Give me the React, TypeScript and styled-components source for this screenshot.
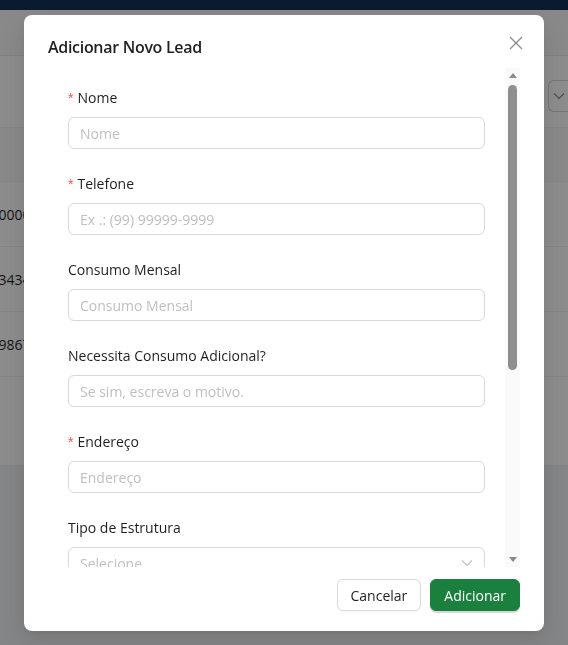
import React from 'react';
import styled, {createGlobalStyle} from 'styled-components';

const GlobalStyle = createGlobalStyle`
  html, body {
    margin: 0;
    padding: 0;
    background: #f0f2f5;
    font-family: "Open Sans", "Noto Sans", sans-serif;
    overflow: hidden;
  }
  * { box-sizing: border-box; }
`

interface Field {
    label: string,
    placeholder: string,
    required?: boolean,
    select?: boolean
}

const fields: Field[] = [
    {label: 'Nome', placeholder: 'Nome', required: true},
    {label: 'Telefone', placeholder: 'Ex .: (99) 99999-9999', required: true},
    {label: 'Consumo Mensal', placeholder: 'Consumo Mensal'},
    {label: 'Necessita Consumo Adicional?', placeholder: 'Se sim, escreva o motivo.'},
    {label: 'Endereço', placeholder: 'Endereço', required: true},
    {label: 'Tipo de Estrutura', placeholder: 'Selecione', select: true},
]

const rows = ['(11) 98765-0000', '(21) 91234-3434', '(31) 99876-9867']

const Chevron: React.FC<{color?: string}> = ({color = '#bfbfbf'}) => (
    <svg width="12" height="8" viewBox="0 0 12 8">
        <path d="M1 1.5 L6 6.5 L11 1.5" fill="none" stroke={color} strokeWidth="1.1"/>
    </svg>
)

export default function App() {
    return (
        <>
            <GlobalStyle/>
            <Page>
                <TopBar/>
                <Toolbar/>
                <FilterBar>
                    <FilterSelect>
                        <Chevron color="#8c8c8c"/>
                    </FilterSelect>
                </FilterBar>
                <Table>
                    <HeadRow/>
                    {rows.map(r => (
                        <Row key={r}>
                            <Cell>{r}</Cell>
                        </Row>
                    ))}
                    <EmptyRow/>
                </Table>
            </Page>
            <Overlay/>
            <ModalWrap>
                <Modal>
                    <ModalHeader>
                        <Title>Adicionar Novo Lead</Title>
                        <CloseButton aria-label="Fechar">
                            <svg width="14" height="14" viewBox="0 0 14 14">
                                <path d="M1 1 L13 13 M13 1 L1 13" stroke="#8a8a8a" strokeWidth="1.3"/>
                            </svg>
                        </CloseButton>
                    </ModalHeader>
                    <BodyFrame>
                        <FormArea>
                            {fields.map(f => (
                                <FormItem key={f.label}>
                                    <Label>
                                        {f.required && <Star>*</Star>}
                                        {f.label}
                                    </Label>
                                    {f.select ? (
                                        <SelectBox>
                                            <span>{f.placeholder}</span>
                                            <Chevron/>
                                        </SelectBox>
                                    ) : (
                                        <Input placeholder={f.placeholder}/>
                                    )}
                                </FormItem>
                            ))}
                        </FormArea>
                        <ScrollBar>
                            <Arrow $up/>
                            <Track>
                                <Thumb/>
                            </Track>
                            <Arrow/>
                        </ScrollBar>
                    </BodyFrame>
                    <Footer>
                        <Button>Cancelar</Button>
                        <Button $primary>Adicionar</Button>
                    </Footer>
                </Modal>
            </ModalWrap>
        </>
    )
}

const Page = styled.div`
  display: flex;
  flex-direction: column;
  min-height: 645px;
  background: #f0f2f5;
`

const TopBar = styled.div`
  height: 10px;
  background: #13325a;
`

const Toolbar = styled.div`
  height: 46px;
  background: #fafafa;
  border-bottom: 1px solid #e8e8e8;
`

const FilterBar = styled.div`
  height: 71px;
  display: flex;
  align-items: center;
  justify-content: flex-end;
  background: #ffffff;
  padding-top: 8px;
`

const FilterSelect = styled.div`
  width: 20px;
  height: 32px;
  display: flex;
  align-items: center;
  padding-left: 4px;
  border: 1px solid #d9d9d9;
  border-right: none;
  border-radius: 6px 0 0 6px;
`

const Table = styled.div`
  display: flex;
  flex-direction: column;
  background: #ffffff;
  margin-left: -90px;
`

const HeadRow = styled.div`
  height: 55px;
  background: #fafafa;
  border-bottom: 1px solid #f0f0f0;
  border-top: 1px solid #f0f0f0;
`

const Row = styled.div`
  height: 65px;
  display: flex;
  align-items: center;
  border-bottom: 1px solid #f0f0f0;
`

const Cell = styled.div`
  padding-left: 16px;
  font-size: 14px;
  color: rgba(0, 0, 0, .88);
`

const EmptyRow = styled.div`
  height: 88px;
  background: #ffffff;
`

const Overlay = styled.div`
  position: fixed;
  inset: 0;
  background: rgba(0, 0, 0, .45);
`

const ModalWrap = styled.div`
  position: fixed;
  inset: 0;
  display: flex;
  justify-content: center;
  align-items: flex-start;
  padding-top: 15px;
`

const Modal = styled.div`
  width: 520px;
  background: #ffffff;
  border-radius: 8px;
  padding: 20px 24px 20px;
  box-shadow: 0 6px 16px 0 rgba(0, 0, 0, .08), 0 3px 6px -4px rgba(0, 0, 0, .12), 0 9px 28px 8px rgba(0, 0, 0, .05);
  display: flex;
  flex-direction: column;
`

const ModalHeader = styled.div`
  display: flex;
  align-items: center;
  justify-content: space-between;
  height: 24px;
  margin-bottom: 9px;
`

const Title = styled.div`
  font-size: 16px;
  font-weight: 600;
  line-height: 24px;
  letter-spacing: -0.3px;
  color: rgba(0, 0, 0, .88);
`

const CloseButton = styled.button`
  border: none;
  background: transparent;
  padding: 0;
  width: 22px;
  height: 22px;
  display: flex;
  align-items: center;
  justify-content: center;
  margin-right: -7px;
  margin-top: -8px;
  cursor: pointer;
`

const BodyFrame = styled.div`
  display: flex;
  height: 499px;
`

const FormArea = styled.div`
  flex: 1;
  overflow: hidden;
  padding: 19px 20px 0;
`

const FormItem = styled.div`
  display: flex;
  flex-direction: column;
  margin-bottom: 24px;
`

const Label = styled.label`
  height: 22px;
  line-height: 22px;
  margin-bottom: 8px;
  font-size: 14px;
  color: rgba(0, 0, 0, .88);
`

const Star = styled.span`
  color: #ff4d4f;
  margin-right: 4px;
  font-family: SimSun, sans-serif;
`

const Input = styled.input`
  height: 32px;
  padding: 4px 11px;
  border: 1px solid #d9d9d9;
  border-radius: 6px;
  font-size: 14px;
  font-family: inherit;
  color: rgba(0, 0, 0, .88);
  outline: none;

  &::placeholder {
    color: #bfbfbf;
  }
`

const SelectBox = styled.div`
  height: 32px;
  padding: 0 11px;
  border: 1px solid #d9d9d9;
  border-radius: 6px;
  font-size: 14px;
  color: #bfbfbf;
  display: flex;
  align-items: center;
  justify-content: space-between;
`

const ScrollBar = styled.div`
  width: 15px;
  display: flex;
  flex-direction: column;
  align-items: center;
  background: #fafafa;
`

const Arrow = styled.div<{$up?: boolean}>`
  height: 15px;
  width: 0;
  display: flex;
  align-items: center;
  justify-content: center;
  &::after {
    content: '';
    border-left: 4.5px solid transparent;
    border-right: 4.5px solid transparent;
    ${p => p.$up ? 'border-bottom: 5px solid #8a8a8a;' : 'border-top: 5px solid #8a8a8a;'}
  }
`

const Track = styled.div`
  flex: 1;
  width: 100%;
  display: flex;
  justify-content: center;
  padding-top: 2px;
`

const Thumb = styled.div`
  width: 9px;
  height: 285px;
  border-radius: 5px;
  background: #8f8f8f;
`

const Footer = styled.div`
  display: flex;
  justify-content: flex-end;
  gap: 9px;
  margin-top: 12px;
`

const Button = styled.button<{$primary?: boolean}>`
  height: 32px;
  padding: 0 13px;
  border-radius: 6px;
  font-size: 14px;
  font-family: inherit;
  cursor: pointer;
  border: 1px solid ${p => p.$primary ? '#1b7f3e' : '#d9d9d9'};
  background: ${p => p.$primary ? '#1b7f3e' : '#ffffff'};
  color: ${p => p.$primary ? '#ffffff' : 'rgba(0, 0, 0, .88)'};
  box-shadow: ${p => p.$primary ? '0 2px 0 rgba(0, 0, 0, .15)' : '0 2px 0 rgba(0, 0, 0, .02)'};
`
